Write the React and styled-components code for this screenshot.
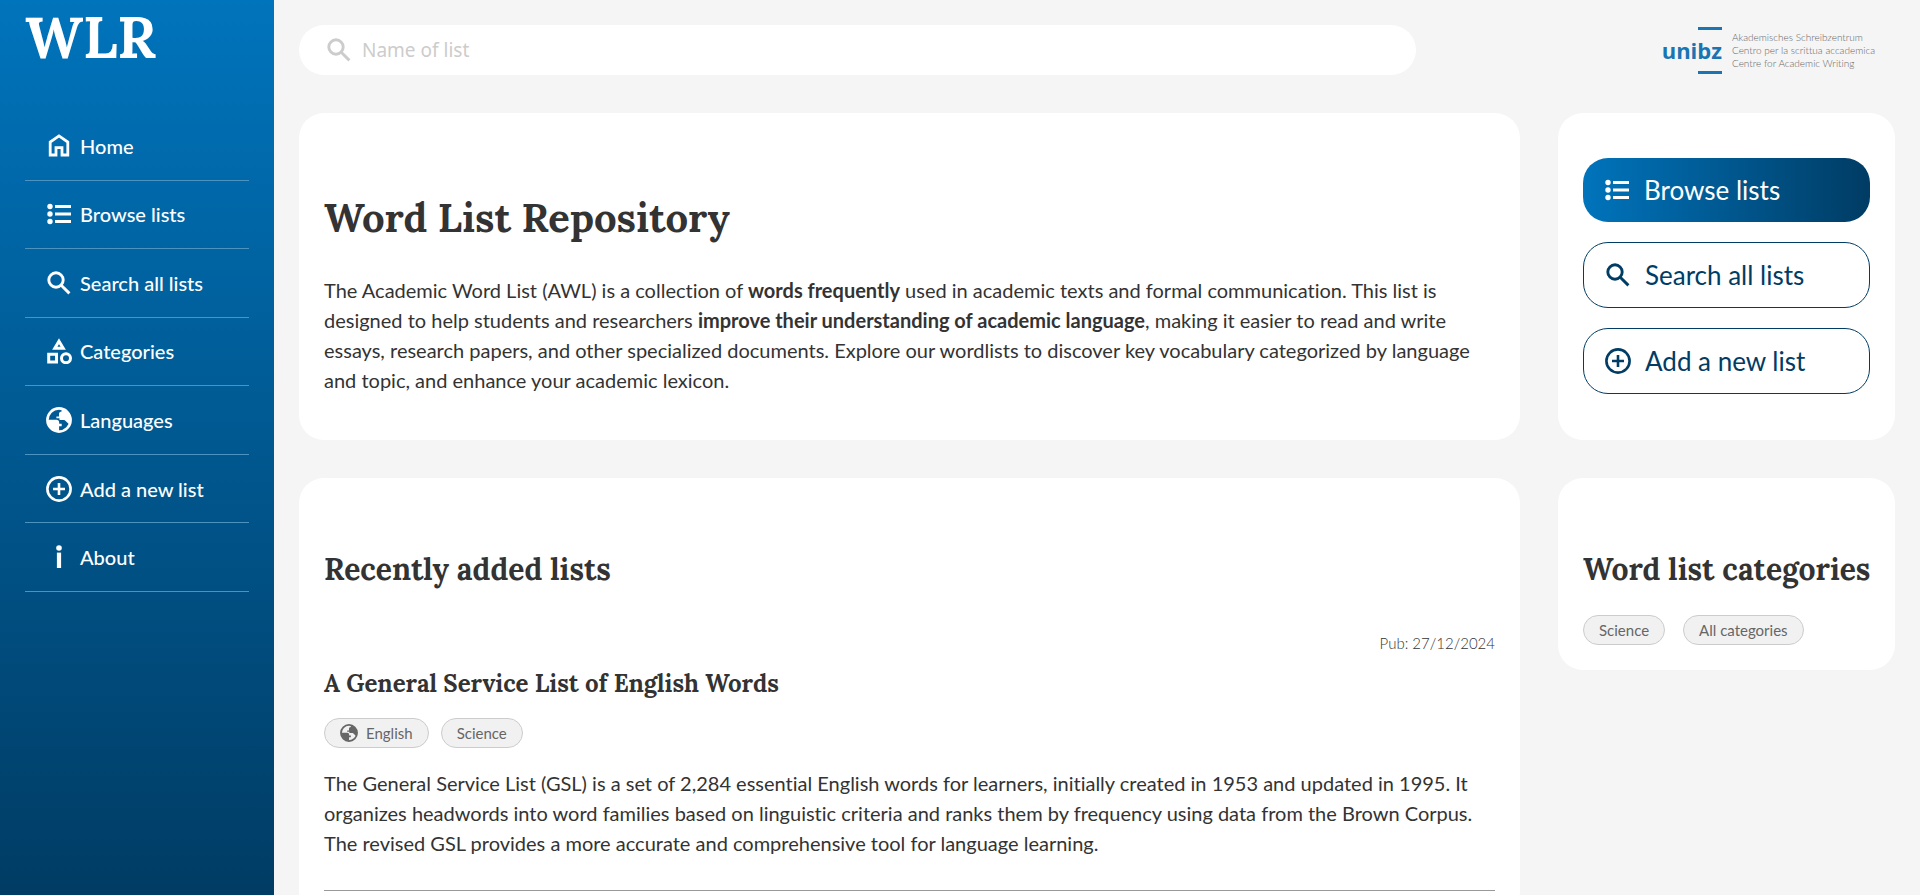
import React from "react";
import styled, { createGlobalStyle } from "styled-components";

const NAV = [
  { icon: "home", label: "Home" },
  { icon: "list", label: "Browse lists" },
  { icon: "search", label: "Search all lists" },
  { icon: "category", label: "Categories" },
  { icon: "globe", label: "Languages" },
  { icon: "add", label: "Add a new list" },
  { icon: "info", label: "About" },
];

const SHAPES = {
  home: (
    <path
      d="M4.2 22V9L13 2.900 21.800 9v13h-5.800v-7.400h-6V22z"
      fill="none"
      stroke="currentColor"
      strokeWidth="2.8"
    />
  ),
  list: (
    <g fill="currentColor">
      <circle cx="4" cy="5.5" r="2.7" />
      <circle cx="4" cy="13" r="2.7" />
      <circle cx="4" cy="20.5" r="2.7" />
      <path d="M9 4.100h16v2.800H9zM9 11.600h16v2.800H9zM9 19.100h16v2.800H9z" />
    </g>
  ),
  search: (
    <g fill="none" stroke="currentColor" strokeWidth="2.9">
      <circle cx="10" cy="10" r="7.2" />
      <path d="M15.2 15.2l8.2 8.2" />
    </g>
  ),
  category: (
    <g fill="none" stroke="currentColor" strokeWidth="3">
      <path d="M13 3.200l4.200 7H8.800z" />
      <path d="M2.700 16.300h7.800v7.800H2.700z" />
      <circle cx="20" cy="20.200" r="4.500" />
    </g>
  ),
  globe: (
    <g>
      <circle cx="13" cy="13" r="11.6" fill="none" stroke="currentColor" strokeWidth="2.6" />
      <path
        fill="currentColor"
        d="M10.4 9.5H13V7c0-1.300 1-2.500 2.600-2.500V2.300C21 3.500 24 7.500 24 13c0 1.500-.3 3-.9 4.300l-3-2.800c-.5-.8-1.500-1.500-2.600-1.500h-4v-1.800h-3.100zM2.400 12.800h8.200c1.400 0 2.600 1.200 2.600 2.600v1.300h2.500v2.600h-2.600v4.600C7 24 2 19 2 13z"
      />
    </g>
  ),
  add: (
    <g fill="none" stroke="currentColor" strokeWidth="2.6">
      <circle cx="13" cy="13" r="11.6" />
      <path d="M13 7v12M7 13h12" />
    </g>
  ),
  info: (
    <g fill="currentColor">
      <circle cx="13" cy="4" r="2.8" />
      <path d="M10.9 8.600h4.200V24h-4.200z" />
    </g>
  ),
};

function Icon({ name, size = 26 }) {
  return (
    <IconSvg width={size} height={size} viewBox="0 0 26 26" aria-hidden="true">
      {SHAPES[name]}
    </IconSvg>
  );
}

function UnibzLogo() {
  return (
    <LogoLink href="#unibz">
      <LogoMark>unibz</LogoMark>
      <LogoText>
        Akademisches Schreibzentrum
        <br />
        Centro per la scrittua accademica
        <br />
        Centre for Academic Writing
      </LogoText>
    </LogoLink>
  );
}

function App() {
  return (
    <>
      <GlobalStyle />
      <Page>
        <Sidebar>
          <Brand href="#home">WLR</Brand>
          <nav>
            <NavList>
              {NAV.map((item) => (
                <NavItem key={item.label}>
                  <NavLink href="#">
                    <Icon name={item.icon} />
                    {item.label}
                  </NavLink>
                </NavItem>
              ))}
            </NavList>
          </nav>
        </Sidebar>

        <Main>
          <TopBar>
            <SearchBox>
              <Icon name="search" />
              <SearchInput type="text" aria-label="Name of list" placeholder="Name of list" />
            </SearchBox>
            <UnibzLogo />
          </TopBar>

          <Columns>
            <Column>
              <Card>
                <PageTitle>Word List Repository</PageTitle>
                <Text>
                  The Academic Word List (AWL) is a collection of <strong>words frequently</strong>{" "}
                  used in academic texts and formal communication. This list is designed to help
                  students and researchers{" "}
                  <strong>improve their understanding of academic language</strong>, making it
                  easier to read and write essays, research papers, and other specialized
                  documents. Explore our wordlists to discover key vocabulary categorized by
                  language and topic, and enhance your academic lexicon.
                </Text>
              </Card>

              <Card>
                <SectionTitle>Recently added lists</SectionTitle>
                <Entry>
                  <PubDate>Pub: 27/12/2024</PubDate>
                  <EntryTitle>A General Service List of English Words</EntryTitle>
                  <Tags>
                    <Tag href="#english">
                      <Icon name="globe" size={18} />
                      English
                    </Tag>
                    <Tag href="#science">Science</Tag>
                  </Tags>
                  <Text>
                    The General Service List (GSL) is a set of 2,284 essential English words for
                    learners, initially created in 1953 and updated in 1995. It organizes
                    headwords into word families based on linguistic criteria and ranks them by
                    frequency using data from the Brown Corpus. The revised GSL provides a more
                    accurate and comprehensive tool for language learning.
                  </Text>
                </Entry>
              </Card>
            </Column>

            <Column>
              <ActionCard>
                <Action href="#browse" $primary>
                  <Icon name="list" />
                  Browse lists
                </Action>
                <Action href="#search">
                  <Icon name="search" />
                  Search all lists
                </Action>
                <Action href="#add">
                  <Icon name="add" />
                  Add a new list
                </Action>
              </ActionCard>

              <Card>
                <SectionTitle>Word list categories</SectionTitle>
                <CategoryTags>
                  <Tag href="#science">Science</Tag>
                  <Tag href="#all">All categories</Tag>
                </CategoryTags>
              </Card>
            </Column>
          </Columns>
        </Main>
      </Page>
    </>
  );
}

const GlobalStyle = createGlobalStyle`
* {
  box-sizing: border-box;
}
body {
  margin: 0;
  background-color: #f5f5f5;
  color: #333;
  font-family: Lato, sans-serif;
  font-size: 20px;
  line-height: 30px;
  font-variant-ligatures: none;
}
h1, h2, h3, p, ul {
  margin: 0;
  padding: 0;
}
a {
  color: inherit;
  text-decoration: none;
}
`;

const serif = `Lora, "Liberation Serif", serif`;

const IconSvg = styled.svg`
display: block;
flex: none;
`;

const Page = styled.div`
display: flex;
height: 100vh;
overflow: hidden;
`;

const Sidebar = styled.aside`
flex: none;
width: 274px;
padding: 8px 25px;
background: linear-gradient(#0074bc, #003c64);
color: #fff;
`;

const Brand = styled.a`
display: block;
margin-bottom: 44px;
font-family: ${serif};
font-size: 57px;
line-height: 60px;
font-weight: bold;
`;

const NavList = styled.ul`
display: grid;
grid-auto-rows: 1fr;
height: 480px;
list-style: none;
`;

const NavItem = styled.li`
border-bottom: 1px solid #4d93c0;
`;

const NavLink = styled.a`
display: flex;
align-items: center;
gap: 8px;
height: 100%;
padding-left: 21px;
font-weight: 500;
`;

const Main = styled.main`
flex: 1;
min-width: 0;
padding: 25px;
`;

const TopBar = styled.header`
display: flex;
align-items: center;
justify-content: space-between;
height: 50px;
margin-bottom: 38px;
`;

const SearchBox = styled.label`
display: flex;
align-items: center;
flex: 0 1 1117px;
gap: 8px;
height: 50px;
padding: 0 27px;
border-radius: 25px;
background-color: #fff;
color: #ccc;
`;

const SearchInput = styled.input`
flex: 1;
border: 0;
outline: 0;
background: transparent;
color: #333;
font-family: "Noto Sans", sans-serif;
font-size: 19px;
&::placeholder {
  color: #ccc;
}
`;

const LogoLink = styled.a`
display: flex;
align-items: center;
gap: 10px;
padding-right: 20px;
`;

const LogoMark = styled.span`
background:
  linear-gradient(#1a75b2, #1a75b2) right top / 24px 3px no-repeat,
  linear-gradient(#1a75b2, #1a75b2) right bottom / 24px 3px no-repeat;
color: #1a75b2;
font-family: "Open Sans", sans-serif;
font-size: 22px;
line-height: 47px;
font-weight: bold;
`;

const LogoText = styled.span`
color: #666;
font-size: 10px;
line-height: 13px;
font-weight: 300;
`;

const Columns = styled.div`
display: grid;
grid-template-columns: minmax(0, 1fr) 337px;
gap: 38px;
`;

const Column = styled.div`
display: flex;
flex-direction: column;
gap: 38px;
`;

const Card = styled.section`
padding: 75px 25px 25px;
border-radius: 25px;
background-color: #fff;
`;

const ActionCard = styled(Card)`
display: flex;
flex-direction: column;
gap: 20px;
padding: 45px 25px 46px;
`;

const PageTitle = styled.h1`
margin-bottom: 27px;
font-family: ${serif};
font-size: 40px;
line-height: 60px;
`;

const SectionTitle = styled.h2`
font-family: ${serif};
font-size: 30px;
line-height: 32px;
white-space: nowrap;
`;

const Text = styled.p`
margin-bottom: 20px;
`;

const Entry = styled.article`
padding-top: 43px;
padding-bottom: 12px;
border-bottom: 1px solid #999;
`;

const PubDate = styled.p`
margin-bottom: 7px;
font-size: 15px;
font-weight: 300;
text-align: right;
`;

const EntryTitle = styled.h3`
margin-bottom: 15px;
font-family: ${serif};
font-size: 24px;
line-height: 38px;
`;

const Tags = styled.div`
display: flex;
gap: 12px;
margin-bottom: 20px;
`;

const CategoryTags = styled(Tags)`
gap: 18px;
margin: 30px 0 0;
`;

const Tag = styled.a`
display: flex;
align-items: center;
gap: 8px;
height: 30px;
padding: 0 15px;
border: 1px solid #ccc;
border-radius: 15px;
background-color: #f1f1f1;
color: #666;
font-size: 15px;
`;

const Action = styled.a`
display: flex;
align-items: center;
gap: 14px;
height: ${(props) => (props.$primary ? "64px" : "66px")};
padding: 0 21px;
border: ${(props) => (props.$primary ? "0" : "1px solid #003c64")};
border-radius: 25px;
background: ${(props) => (props.$primary ? "linear-gradient(to right, #0074bc, #003c64)" : "#fff")};
color: ${(props) => (props.$primary ? "#fff" : "#003c64")};
font-size: 26px;
`;

export default App;
